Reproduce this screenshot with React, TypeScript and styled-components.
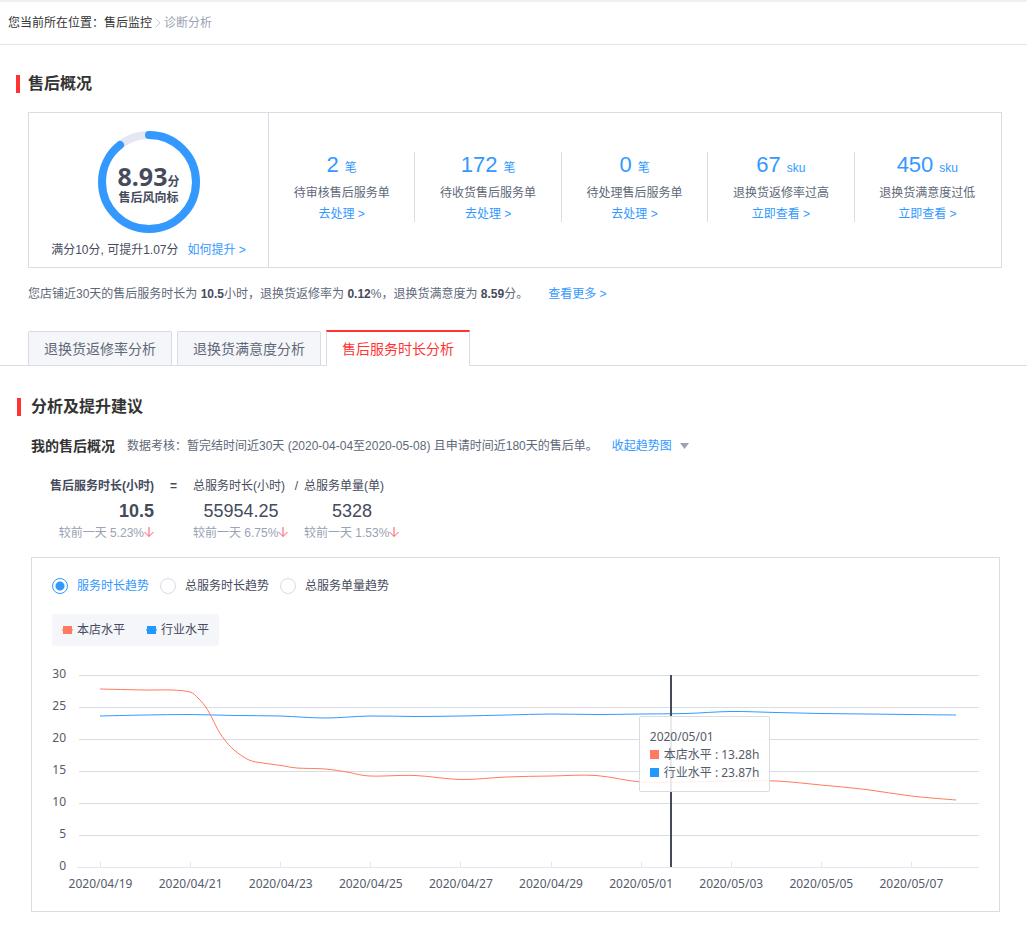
import React, { useState } from "react";
import styled, { createGlobalStyle, css } from "styled-components";

const sans = `"Liberation Sans", "Noto Sans CJK SC", sans-serif`;
const chartSans = `"Noto Sans", "Noto Sans CJK SC", sans-serif`;

const color = {
  blue: "#3399ff",
  red: "#ff3333",
  coral: "#ff7a5e",
  line: "#d7dce5",
  ink: "#333333",
  slate: "#454b5c",
  body: "#606878",
  mute: "#9aa2b3",
};

const GlobalStyle = createGlobalStyle`
  * { box-sizing: border-box; }
  body {
    margin: 0;
    background: #fff;
    font: 12px/20px ${sans};
    color: ${color.body};
  }
  h1, h2, h3, p { margin: 0; }
`;

const Page = styled.div`
  border-top: 2px solid #edf0f4;
`;

const Breadcrumb = styled.nav`
  display: flex;
  align-items: center;
  height: 43px;
  padding-left: 8px;
  border-bottom: 1px solid #e2e6ee;
  color: ${color.ink};

  a { color: inherit; text-decoration: none; }
  svg { margin: 0 3px; }
`;

const Current = styled.span`
  color: ${color.mute};
`;

const SectionTitle = styled.h2<{ $indent: number }>`
  display: flex;
  align-items: center;
  gap: ${(p) => p.$indent}px;
  height: 18px;
  font-size: 16px;
  line-height: 18px;
  font-weight: bold;
  color: ${color.ink};

  &::before {
    content: "";
    width: 4px;
    height: 18px;
    background: ${color.red};
  }
`;

const Overview = styled.section`
  padding: 30px 25px 0 16px;
`;

const OverviewCard = styled.div`
  display: flex;
  margin: 19px 0 0 12px;
  border: 1px solid ${color.line};
`;

const ScoreCell = styled.div`
  flex: none;
  width: 240px;
  padding: 18px 0 7px;
  border-right: 1px solid ${color.line};
  text-align: center;
  color: ${color.slate};
`;

const Ring = styled.div`
  display: grid;
  justify-content: center;
  margin-bottom: 7px;

  > * { grid-area: 1 / 1; }
`;

const RingText = styled.div`
  align-self: center;
  padding-top: 4px;
  font-weight: bold;
`;

const Score = styled.div`
  font-size: 12px;
  line-height: 16px;

  strong { font: bold 25px/26px ${chartSans}; }
`;

const RingLabel = styled.div`
  line-height: 16px;
`;

const Link = styled.a<{ $gap?: number }>`
  margin-left: ${(p) => p.$gap ?? 0}px;
  color: ${color.blue};
  text-decoration: none;
`;

const Stats = styled.div`
  flex: 1;
  display: flex;
  align-items: flex-start;
  padding: 39px 1px 0 0;
`;

const Stat = styled.div`
  flex: 1;
  height: 70px;
  text-align: center;

  & + & { border-left: 1px solid ${color.line}; }
`;

const StatValue = styled.div`
  height: 31px;
  line-height: 26px;
  color: ${color.blue};

  b { margin-right: 6px; font-size: 22px; font-weight: normal; }
`;

const StatLine = styled.div`
  line-height: 21px;
`;

const Summary = styled.p`
  margin: 16px 0 0 12px;

  strong { color: ${color.slate}; }
`;

const Tabs = styled.div`
  display: flex;
  align-items: flex-end;
  gap: 5px;
  height: 36px;
  margin-top: 26px;
  padding-left: 28px;
  border-bottom: 1px solid ${color.line};
`;

const Tab = styled.button<{ $active: boolean }>`
  height: 34px;
  padding: 0 15px;
  border: 1px solid ${color.line};
  border-bottom: 0;
  border-radius: 2px 2px 0 0;
  background: #f5f6f9;
  color: ${color.body};
  font: 14px/20px ${sans};
  cursor: pointer;

  ${(p) =>
    p.$active &&
    css`
      height: 36px;
      margin-bottom: -1px;
      border-top: 2px solid ${color.red};
      border-radius: 0;
      background: #fff;
      color: ${color.red};
    `}
`;

const Analysis = styled.section`
  padding: 32px 27px 20px 17px;
`;

const Body = styled.div`
  padding-left: 14px;
`;

const Intro = styled.div`
  display: flex;
  align-items: center;
  margin-top: 20px;

  h3 {
    margin-right: 12px;
    font-size: 14px;
    line-height: 20px;
    color: ${color.ink};
  }
  svg { margin-left: 8px; }
`;

const Formula = styled.div`
  display: flex;
  margin: 19px 0 16px 19px;
  color: ${color.slate};
`;

const Metric = styled.div<{ $total?: boolean }>`
  width: ${(p) => (p.$total ? 104 : 96)}px;
  text-align: ${(p) => (p.$total ? "right" : "left")};
  font-weight: ${(p) => (p.$total ? "bold" : "normal")};
  white-space: nowrap;
`;

const MetricLabel = styled.div`
  line-height: 22px;
`;

const MetricValue = styled.div<{ $total?: boolean }>`
  font-size: 18px;
  line-height: 28px;
  text-align: ${(p) => (p.$total ? "right" : "center")};
`;

const MetricChange = styled.div`
  line-height: 16px;
  font-weight: normal;
  color: ${color.mute};
`;

const Operator = styled.div<{ $wide?: boolean }>`
  width: ${(p) => (p.$wide ? 39 : 15)}px;
  line-height: 22px;
  text-align: center;
  font-weight: ${(p) => (p.$wide ? "bold" : "normal")};
`;

const ChartPanel = styled.div`
  padding: 20px;
  border: 1px solid ${color.line};
`;

const Radios = styled.div`
  display: flex;
  gap: 11px;
`;

const RadioLabel = styled.label`
  display: flex;
  align-items: center;
  gap: 9px;
  line-height: 16px;
  color: ${color.slate};
  cursor: pointer;

  input {
    appearance: none;
    width: 16px;
    height: 16px;
    margin: 0;
    border: 1px solid ${color.line};
    border-radius: 50%;
    background: #fff;
  }
  input:checked {
    border-color: ${color.blue};
    background: radial-gradient(circle, ${color.blue} 4px, #fff 5px);
  }
  &:has(input:checked) { color: ${color.blue}; }
`;

const Legend = styled.div`
  display: inline-flex;
  gap: 21px;
  height: 32px;
  margin-top: 20px;
  padding: 0 10px;
  border-radius: 2px;
  background: #f5f6f9;
  font-family: ${chartSans};
  line-height: 30px;
  color: ${color.slate};
  vertical-align: top;
`;

const LegendItem = styled.span`
  display: flex;
  align-items: center;
  gap: 4px;
`;

const Chart = styled.div`
  position: relative;
  margin-top: 14px;

  > svg {
    display: block;
    width: 100%;
    height: auto;
    overflow: visible;
    font: 12px ${chartSans};
    fill: #555b6a;
  }
`;

const Tooltip = styled.div`
  position: absolute;
  left: 63.3%;
  top: 24.2%;
  padding: 11px 10px 9px;
  border: 1px solid ${color.line};
  border-radius: 2px;
  background: rgba(255, 255, 255, 0.88);
  font-family: ${chartSans};
  line-height: 18px;
  color: #555b6a;
  white-space: nowrap;
`;

const TooltipRow = styled.div<{ $color: string }>`
  display: flex;
  align-items: center;
  gap: 5px;

  &::before {
    content: "";
    width: 9px;
    height: 9px;
    background: ${(p) => p.$color};
  }
`;

type Point = [number, number];

const shop: Point[] = [
  [48, 29], [93, 30], [120, 30], [138, 32], [146, 38], [153, 46], [159, 56], [165, 68], [172, 79],
  [182, 90], [197, 100], [211, 103], [229, 105.5], [245, 108], [273, 109], [295, 112],
  [318, 116], [363, 115.5], [409, 119.5], [454, 117], [499, 116], [544, 115.5],
  [589, 122], [634, 122], [679, 121], [724, 121], [769, 125], [814, 129.5], [859, 136], [904, 140],
];

const industry: Point[] = [
  [48, 56], [93, 55], [138, 54.5], [183, 55.5], [228, 56], [273, 58], [318, 56],
  [363, 56.5], [409, 56], [454, 55], [499, 54], [544, 54.5], [589, 54], [634, 53.5],
  [679, 51.5], [724, 52.5], [769, 53.5], [814, 54], [859, 54.5], [904, 55],
];

// Catmull-Rom spline through the points, written as cubic Béziers.
const smooth = (pts: Point[]) =>
  pts.slice(1).reduce((d, p, i) => {
    const p0 = pts[Math.max(i - 1, 0)];
    const p1 = pts[i];
    const p3 = pts[Math.min(i + 2, pts.length - 1)];
    return (
      d +
      `C${p1[0] + (p[0] - p0[0]) / 6},${p1[1] + (p[1] - p0[1]) / 6} ` +
      `${p[0] - (p3[0] - p1[0]) / 6},${p[1] - (p3[1] - p1[1]) / 6} ${p[0]},${p[1]}`
    );
  }, `M${pts[0][0]},${pts[0][1]}`);

const levels = [30, 25, 20, 15, 10, 5, 0];
const dates = ["04/19", "04/21", "04/23", "04/25", "04/27", "04/29", "05/01", "05/03", "05/05", "05/07"];

const stats = [
  { value: 2, unit: "笔", label: "待审核售后服务单", link: "去处理 >" },
  { value: 172, unit: "笔", label: "待收货售后服务单", link: "去处理 >" },
  { value: 0, unit: "笔", label: "待处理售后服务单", link: "去处理 >" },
  { value: 67, unit: "sku", label: "退换货返修率过高", link: "立即查看 >" },
  { value: 450, unit: "sku", label: "退换货满意度过低", link: "立即查看 >" },
];

const tabs = ["退换货返修率分析", "退换货满意度分析", "售后服务时长分析"];
const trends = ["服务时长趋势", "总服务时长趋势", "总服务单量趋势"];

const DownArrow = () => (
  <svg width="10" height="10" viewBox="0 0 10 10" fill="none" stroke="#ff5566">
    <path d="M5 0V9.3M0.5 5L5 9.5L9.5 5" />
  </svg>
);

const LegendMark = ({ fill }: { fill: string }) => (
  <svg width="11" height="9" viewBox="0 0 11 9">
    <path d="M0 4H11" stroke={fill} strokeWidth="2" opacity="0.6" />
    <rect x="1" y="0" width="9" height="8" fill={fill} />
  </svg>
);

const ScoreRing = () => {
  const r = 47;
  const length = 2 * Math.PI * r;
  return (
    <svg width="102" height="102" viewBox="0 0 102 102" fill="none" strokeWidth="8">
      <circle cx="51" cy="51" r={r} stroke="#e3e8f2" />
      <circle
        cx="51"
        cy="51"
        r={r}
        stroke={color.blue}
        strokeLinecap="round"
        strokeDasharray={`${length * 0.893} ${length}`}
        transform="rotate(-90 51 51)"
      />
    </svg>
  );
};

const TrendChart = () => (
  <Chart>
    <svg viewBox="0 0 927 231" role="img" aria-label="服务时长趋势">
      {levels.map((level, i) => (
        <g key={level}>
          <path d={`M${level ? 27 : 25} ${15.5 + i * 32}H927`} stroke={level ? color.line : "#e2e6ee"} />
          <text x="14" y={18 + i * 32} textAnchor="end">{level}</text>
        </g>
      ))}
      {dates.map((date, i) => (
        <g key={date}>
          <path d={`M${48.5 + Math.round(i * 90.1)} 202V207`} stroke="#e2e6ee" />
          <text x={48.5 + i * 90.1} y="228" textAnchor="middle">2020/{date}</text>
        </g>
      ))}
      <path d={smooth(industry)} fill="none" stroke={color.blue} />
      <path d={smooth(shop)} fill="none" stroke={color.coral} />
      <path d="M619 15V207" stroke={color.slate} strokeWidth="2" />
    </svg>
    <Tooltip>
      <div>2020/05/01</div>
      <TooltipRow $color={color.coral}>本店水平 : 13.28h</TooltipRow>
      <TooltipRow $color="#2299ff">行业水平 : 23.87h</TooltipRow>
    </Tooltip>
  </Chart>
);

export default function App() {
  const [tab, setTab] = useState(2);
  const [trend, setTrend] = useState(0);

  return (
    <Page>
      <GlobalStyle />
      <Breadcrumb>
        <span>您当前所在位置：</span>
        <a href="#monitor">售后监控</a>
        <svg width="6" height="10" viewBox="0 0 6 10" fill="none" stroke="#c8cdd8">
          <path d="M0.5 0.5L5 5L0.5 9.5" />
        </svg>
        <Current>诊断分析</Current>
      </Breadcrumb>

      <Overview>
        <SectionTitle $indent={8}>售后概况</SectionTitle>
        <OverviewCard>
          <ScoreCell>
            <Ring>
              <ScoreRing />
              <RingText>
                <Score><strong>8.93</strong>分</Score>
                <RingLabel>售后风向标</RingLabel>
              </RingText>
            </Ring>
            满分10分, 可提升1.07分
            <Link href="#improve" $gap={9}>如何提升 &gt;</Link>
          </ScoreCell>
          <Stats>
            {stats.map((s) => (
              <Stat key={s.label}>
                <StatValue><b>{s.value}</b>{s.unit}</StatValue>
                <StatLine>{s.label}</StatLine>
                <StatLine><Link href="#detail">{s.link}</Link></StatLine>
              </Stat>
            ))}
          </Stats>
        </OverviewCard>
        <Summary>
          您店铺近30天的售后服务时长为 <strong>10.5</strong>小时，退换货返修率为 <strong>0.12</strong>%，退换货满意度为{" "}
          <strong>8.59</strong>分。
          <Link href="#more" $gap={20}>查看更多 &gt;</Link>
        </Summary>
      </Overview>

      <Tabs role="tablist">
        {tabs.map((name, i) => (
          <Tab key={name} role="tab" aria-selected={tab === i} $active={tab === i} onClick={() => setTab(i)}>
            {name}
          </Tab>
        ))}
      </Tabs>

      <Analysis>
        <SectionTitle $indent={10}>分析及提升建议</SectionTitle>
        <Body>
          <Intro>
            <h3>我的售后概况</h3>
            <span>数据考核：暂完结时间近30天 (2020-04-04至2020-05-08) 且申请时间近180天的售后单。</span>
            <Link href="#trend" $gap={14}>收起趋势图</Link>
            <svg width="9" height="6" viewBox="0 0 9 6" fill={color.mute}>
              <path d="M0 0H9L4.5 6Z" />
            </svg>
          </Intro>
          <Formula>
            <Metric $total>
              <MetricLabel>售后服务时长(小时)</MetricLabel>
              <MetricValue $total>10.5</MetricValue>
              <MetricChange>较前一天 5.23%<DownArrow /></MetricChange>
            </Metric>
            <Operator $wide>=</Operator>
            <Metric>
              <MetricLabel>总服务时长(小时)</MetricLabel>
              <MetricValue>55954.25</MetricValue>
              <MetricChange>较前一天 6.75%<DownArrow /></MetricChange>
            </Metric>
            <Operator>/</Operator>
            <Metric>
              <MetricLabel>总服务单量(单)</MetricLabel>
              <MetricValue>5328</MetricValue>
              <MetricChange>较前一天 1.53%<DownArrow /></MetricChange>
            </Metric>
          </Formula>
          <ChartPanel>
            <Radios role="radiogroup" aria-label="趋势">
              {trends.map((name, i) => (
                <RadioLabel key={name}>
                  <input type="radio" name="trend" checked={trend === i} onChange={() => setTrend(i)} />
                  {name}
                </RadioLabel>
              ))}
            </Radios>
            <Legend>
              <LegendItem><LegendMark fill={color.coral} />本店水平</LegendItem>
              <LegendItem><LegendMark fill="#2299ff" />行业水平</LegendItem>
            </Legend>
            <TrendChart />
          </ChartPanel>
        </Body>
      </Analysis>
    </Page>
  );
}
